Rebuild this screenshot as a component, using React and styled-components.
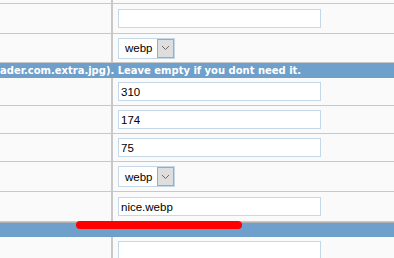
import styled, { createGlobalStyle } from "styled-components";

const GlobalStyle = createGlobalStyle`
  html, body {
    margin: 0;
    padding: 0;
    background: #fafafa;
    overflow: hidden;
  }
  #root {
    width: 394px;
    height: 258px;
  }
`;

const Page = styled.div`
  position: relative;
  width: 394px;
  height: 258px;
  overflow: hidden;
  background: #fafafa;
  font-family: "Liberation Sans", Arial, sans-serif;
`;

const Table = styled.div`
  display: flex;
  flex-direction: column;
`;

const Row = styled.div`
  display: grid;
  grid-template-columns: 113px 1fr;
  height: ${(p) => p.$h}px;
  border-bottom: ${(p) => (p.$last ? "none" : "1px solid #c8c8c8")};
  box-sizing: content-box;
`;

const Label = styled.div`
  background: #fafafa;
  border-right: 2px solid #c8c8c8;
`;

const Field = styled.div`
  display: flex;
  align-items: ${(p) => (p.$top ? "flex-start" : "center")};
  padding-left: 5px;
  padding-top: ${(p) => p.$pt || 0}px;
  background: #fafafa;
`;

const Input = styled.div`
  box-sizing: border-box;
  width: 203px;
  height: 19px;
  border: 1px solid #c5d8e8;
  background: #fff;
  padding-left: 2px;
  display: flex;
  align-items: center;
  font-size: 11.5px;
  color: #000;
`;

const Select = styled.div`
  box-sizing: border-box;
  width: 57px;
  height: 21px;
  border: 1px solid #c5d8e8;
  background: #fff;
  display: flex;
  align-items: center;
  justify-content: space-between;
  padding-left: 6px;
  padding-right: 0;
  font-size: 11.5px;
  color: #000;
`;

const SelectButton = styled.span`
  box-sizing: border-box;
  width: 17px;
  height: 19px;
  background: #dedede;
  border: 1px solid #a9a9a9;
  display: flex;
  align-items: center;
  justify-content: center;
`;

const Section = styled.div`
  box-sizing: border-box;
  height: ${(p) => p.$h}px;
  background: #6f9fcb;
  border-top: ${(p) => (p.$line ? "1px solid #b2b2b2" : "none")};
  color: #fff;
  font-family: "DejaVu Sans", Verdana, sans-serif;
  font-stretch: condensed;
  font-weight: bold;
  font-size: 11.1px;
  line-height: ${(p) => p.$h}px;
  white-space: nowrap;
  overflow: hidden;
`;

const Marker = styled.div`
  position: absolute;
  left: 76px;
  top: 221px;
  width: 166px;
  height: 8px;
  border-radius: 4px;
  background: #ff0000;
`;

const Chevron = () => (
  <svg width="9" height="6" viewBox="0 0 9 6">
    <path d="M1 1 L4.5 4.5 L8 1" fill="none" stroke="#6a6a6a" strokeWidth="1" />
  </svg>
);

const Dropdown = ({ value }) => (
  <Select>
    {value}
    <SelectButton>
      <Chevron />
    </SelectButton>
  </Select>
);

const rows = [
  { h: 29, kind: "input", value: "" },
  { h: 28, kind: "select", value: "webp" },
  { section: "ader.com.extra.jpg). Leave empty if you dont need it.", h: 15 },
  { h: 27, kind: "input", value: "310" },
  { h: 27, kind: "input", value: "174" },
  { h: 27, kind: "input", value: "75" },
  { h: 29, kind: "select", value: "webp" },
  { h: 29, kind: "input", value: "nice.webp" },
  { section: "", h: 15, line: true },
  { h: 30, kind: "input", value: "", last: true, pt: 4 },
];

export default function App() {
  return (
    <Page>
      <GlobalStyle />
      <Table>
        <Row $h={3}>
          <Label />
          <Field />
        </Row>
        {rows.map((r, i) =>
          r.section !== undefined ? (
            <Section key={i} $h={r.h} $line={r.line}>
              {r.section}
            </Section>
          ) : (
            <Row key={i} $h={r.h} $last={r.last}>
              <Label />
              <Field $top={!!r.pt} $pt={r.pt}>
                {r.kind === "input" ? (
                  <Input>{r.value}</Input>
                ) : (
                  <Dropdown value={r.value} />
                )}
              </Field>
            </Row>
          )
        )}
      </Table>
      <Marker />
    </Page>
  );
}
